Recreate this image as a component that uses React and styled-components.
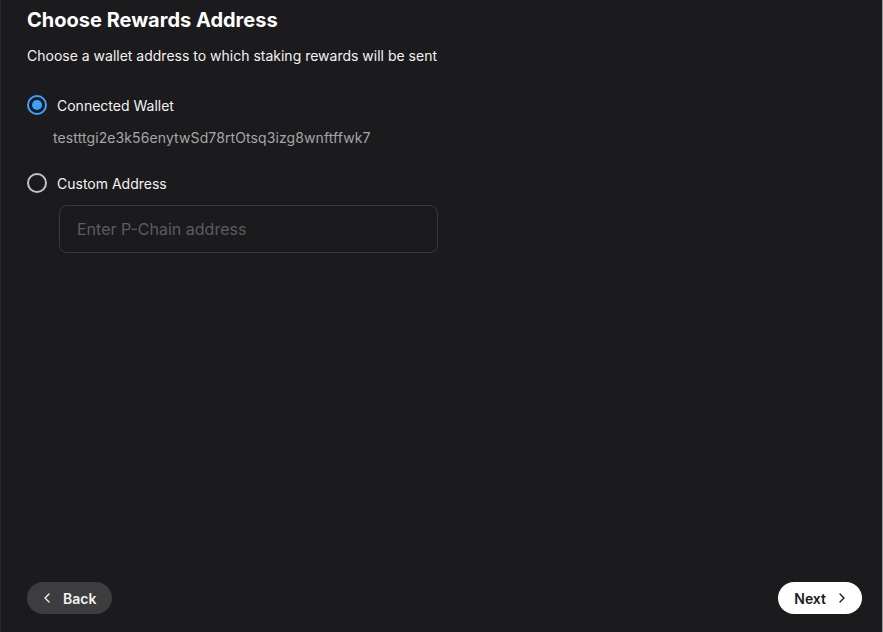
import React, { useState } from "react";
import styled, { createGlobalStyle } from "styled-components";
import { ChevronLeft, ChevronRight } from "lucide-react";

const Global = createGlobalStyle`
  html, body {
    margin: 0;
    padding: 0;
    background: #1b1b1d;
  }
  * { box-sizing: border-box; }
`;

const Page = styled.div`
  width: 883px;
  height: 632px;
  display: flex;
  flex-direction: column;
  padding: 8px 20px 18px 26px;
  background: #1b1b1d;
  border-left: 1px solid #2a2a2c;
  border-right: 1px solid #9a9a9c;
  font-family: Inter, "Liberation Sans", sans-serif;
  color: #ffffff;
`;

const Title = styled.h1`
  margin: 0;
  font-size: 20px;
  line-height: 24px;
  font-weight: 700;
`;

const Subtitle = styled.p`
  margin: 14px 0 0;
  font-size: 14px;
  line-height: 20px;
  color: #f2f2f2;
`;

const Options = styled.div`
  margin-top: 27px;
  display: flex;
  flex-direction: column;
`;

const RadioRow = styled.label`
  display: flex;
  align-items: center;
  gap: 10px;
  height: 24px;
  cursor: pointer;
  font-size: 14px;
  color: #f2f2f2;
`;

const Radio = styled.span`
  width: 20px;
  height: 20px;
  border-radius: 50%;
  border: 2px solid ${(p) => (p.checked ? "#3aa3ff" : "#c4c4c6")};
  display: flex;
  align-items: center;
  justify-content: center;

  &::after {
    content: "";
    width: 10px;
    height: 10px;
    border-radius: 50%;
    background: ${(p) => (p.checked ? "#3aa3ff" : "transparent")};
  }
`;

const Address = styled.div`
  margin: 11px 0 0 26px;
  font-size: 14px;
  line-height: 20px;
  letter-spacing: 0.1px;
  color: #a6a6a8;
`;

const Spaced = styled.div`
  margin-top: ${(p) => p.top}px;
`;

const Input = styled.input`
  margin: 10px 0 0 32px;
  width: 379px;
  height: 48px;
  padding: 0 17px;
  background: transparent;
  border: 1px solid #3a3a3c;
  border-radius: 8px;
  font-family: inherit;
  font-size: 16px;
  color: #fff;
  outline: none;

  &::placeholder {
    color: #5c5c5e;
  }
`;

const Footer = styled.div`
  margin-top: auto;
  display: flex;
  justify-content: space-between;
  align-items: center;
`;

const Button = styled.button`
  height: 32px;
  border: none;
  border-radius: 16px;
  display: flex;
  align-items: center;
  gap: 8px;
  font-family: inherit;
  font-size: 14px;
  font-weight: 600;
  cursor: pointer;
  background: ${(p) => (p.primary ? "#ffffff" : "#3d3d40")};
  color: ${(p) => (p.primary ? "#1b1b1d" : "#f2f2f2")};
  padding: ${(p) => (p.primary ? "0 12px 0 16px" : "0 16px 0 12px")};
`;

export default function App() {
  const [choice, setChoice] = useState("wallet");
  return (
    <>
      <Global />
      <Page>
        <Title>Choose Rewards Address</Title>
        <Subtitle>Choose a wallet address to which staking rewards will be sent</Subtitle>
        <Options>
          <RadioRow onClick={() => setChoice("wallet")}>
            <Radio checked={choice === "wallet"} />
            Connected Wallet
          </RadioRow>
          <Address>testttgi2e3k56enytwSd78rtOtsq3izg8wnftffwk7</Address>
          <Spaced top={23}>
            <RadioRow onClick={() => setChoice("custom")}>
              <Radio checked={choice === "custom"} />
              Custom Address
            </RadioRow>
          </Spaced>
          <Input placeholder="Enter P-Chain address" />
        </Options>
        <Footer>
          <Button>
            <ChevronLeft size={16} strokeWidth={2} />
            Back
          </Button>
          <Button primary>
            Next
            <ChevronRight size={16} strokeWidth={2} />
          </Button>
        </Footer>
      </Page>
    </>
  );
}
